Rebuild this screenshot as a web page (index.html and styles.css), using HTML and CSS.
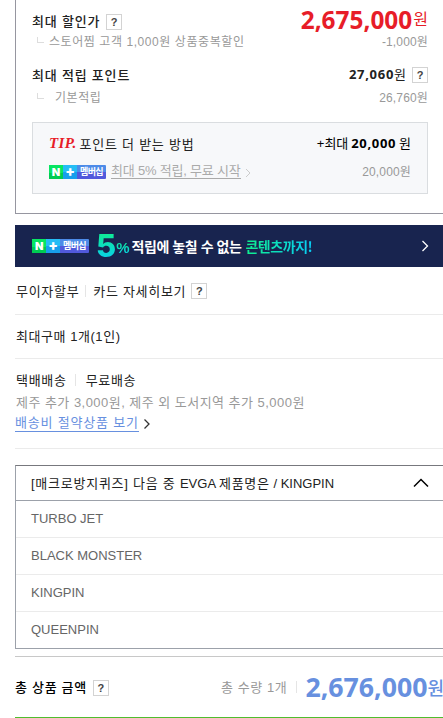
FILE: index.html
```html
<!DOCTYPE html>
<html lang="ko">
<head>
    <meta charset="UTF-8">
    <meta name="viewport" content="width=device-width, initial-scale=1.0">
    <title>상품 구매</title>
    <link rel="stylesheet" href="styles.css">
</head>
<body>
    <div class="purchase">
        <!-- Discount and points -->
        <section class="benefit">
            <div class="row row-price">
                <strong class="title">최대 할인가</strong>
                <button class="help">?</button>
                <span class="price"><b>2,675,000</b><span class="won">원</span></span>
            </div>
            <div class="row row-sub">
                <i class="branch"></i>
                <span class="sub-name">스토어찜 고객 1,000원 상품중복할인</span>
                <span class="sub-value">-1,000원</span>
            </div>
            <div class="row row-point">
                <strong class="title">최대 적립 포인트</strong>
                <span class="point"><b>27,060</b>원</span>
                <button class="help">?</button>
            </div>
            <div class="row row-sub">
                <i class="branch"></i>
                <span class="sub-name basic">기본적립</span>
                <span class="sub-value">26,760원</span>
            </div>

            <div class="tip">
                <div class="row tip-head">
                    <em class="tip-mark">TIP.</em>
                    <span class="tip-title">포인트 더 받는 방법</span>
                    <span class="tip-max">+최대 <b>20,000</b> 원</span>
                </div>
                <div class="row tip-body">
                    <span class="badge"><b>N</b><b class="plus">+</b><span>멤버십</span></span>
                    <a class="tip-link">최대 5% 적립, 무료 시작</a>
                    <svg class="tip-arrow" width="6" height="10" viewBox="0 0 6 10"><path d="M1 1l4 4-4 4"/></svg>
                    <span class="tip-value">20,000원</span>
                </div>
            </div>
        </section>

        <!-- Membership banner -->
        <div class="banner">
            <span class="badge"><b>N</b><b class="plus">+</b><span>멤버십</span></span>
            <span class="five">5</span><span class="percent">%</span>
            <span class="banner-text">적립에 놓칠 수 없는</span>
            <span class="banner-point">콘텐츠까지!</span>
            <svg class="banner-arrow" width="8" height="12" viewBox="0 0 8 12"><path d="M1.5 1l5 5-5 5"/></svg>
        </div>

        <div class="info info-card">
            <span class="card-free">무이자할부</span>
            <i class="bar"></i>
            <span class="card-more">카드 자세히보기</span>
            <button class="help">?</button>
        </div>
        <div class="info info-limit"><span class="limit">최대구매 1개(1인)</span></div>
        <div class="info info-delivery">
            <div class="row">
                <span class="method">택배배송</span>
                <i class="bar"></i>
                <span class="method">무료배송</span>
            </div>
            <div class="row"><span class="extra">제주 추가 3,000원, 제주 외 도서지역 추가 5,000원</span></div>
            <div class="row">
                <a class="saving">배송비 절약상품 보기</a>
                <svg class="saving-arrow" width="8" height="12" viewBox="0 0 8 12"><path d="M1.5 1.5l4.5 4.5-4.5 4.5"/></svg>
            </div>
        </div>

        <!-- Option select -->
        <div class="select">
            <div class="select-head">
                <span class="question"><span class="ko">[매크로방지퀴즈] 다음 중 </span>EVGA <span class="ko">제품명은</span> / KINGPIN</span>
                <svg class="select-arrow" width="16" height="10" viewBox="0 0 16 10"><path d="M1 8.5l7-7 7 7"/></svg>
            </div>
            <ul class="options">
                <li>TURBO JET</li>
                <li>BLACK MONSTER</li>
                <li>KINGPIN</li>
                <li>QUEENPIN</li>
            </ul>
        </div>

        <div class="total">
            <strong class="total-title">총 상품 금액</strong>
            <button class="help">?</button>
            <span class="total-count">총 수량 1개</span>
            <i class="bar"></i>
            <span class="total-price"><b>2,676,000</b><span class="total-won">원</span></span>
        </div>
    </div>
</body>
</html>
```
FILE: styles.css
```css
* {
    box-sizing: border-box;
}
body {
    margin: 0;
    background: #fff;
    font-family: "Liberation Sans", "Noto Sans CJK KR", sans-serif;
    font-size: 13px;
    color: #222;
    overflow: hidden;
}
.purchase {
    height: 718px;
    padding-left: 15px;
    overflow: hidden;
    white-space: nowrap;
}
.row {
    display: flex;
    align-items: center;
}
.row > *, .info > *, .banner > *, .total > * {
    flex-shrink: 0;
}
.help {
    width: 16px;
    height: 16px;
    padding: 0;
    border: 1px solid #d3d3d3;
    background: #fff;
    font: bold 11px/14px "Liberation Sans", sans-serif;
    color: #444;
    text-align: center;
}
.bar {
    width: 1px;
    height: 12px;
    background: #e5e5e5;
}

/* benefit box */
.benefit {
    height: 214px;
    padding: 9px 15px 0 16px;
    border: solid #9696a0;
    border-width: 0 0 1px 1px;
}
.title {
    font-weight: 500;
    letter-spacing: 0.8px;
}
.row-price {
    height: 22px;
}
.row-price .help {
    margin: 3px 0 0 6px;
}
.price {
    display: flex;
    align-items: center;
    margin-left: auto;
    color: #e71d28;
}
.price b {
    font: bold 24.4px/22px "Noto Sans", sans-serif;
}
.won {
    margin-left: 1px;
    font-size: 16px;
    line-height: 20px;
}
.row-sub {
    height: 18px;
    color: #999;
    font-size: 12px;
}
.sub-name {
    letter-spacing: 0.57px;
}
.branch {
    width: 7px;
    height: 6px;
    margin: 0 5px 1px 5px;
    border: solid #ddd;
    border-width: 0 0 1px 1px;
}
.basic {
    margin-left: 6px;
}
.sub-value {
    margin-left: auto;
    letter-spacing: 0.15px;
}
.row-point {
    height: 22px;
    margin: 14px 0 2px;
}
.point {
    margin-left: auto;
}
.point b {
    font: bold 13px/20px "Noto Sans", sans-serif;
    letter-spacing: 0.7px;
}
.row-point .help {
    margin: 2px 0 0 6px;
}

.tip {
    height: 72px;
    margin-top: 17px;
    padding: 10px 16px 0;
    border: 1px solid #dadde0;
    background: #f7f8fa;
}
.tip-head {
    height: 24px;
    padding-bottom: 4px;
}
.tip-mark {
    font: italic bold 15px/20px "Liberation Serif", serif;
    letter-spacing: 0.4px;
    color: #e71d28;
}
.tip-title {
    margin-left: 3px;
    letter-spacing: 0.75px;
}
.tip-max {
    margin-left: auto;
    color: #000;
    word-spacing: -0.8px;
}
.tip-max b {
    font: bold 13px/20px "Noto Sans", sans-serif;
    letter-spacing: 0.7px;
}
.tip-body {
    height: 30px;
    color: #aaa;
    font-size: 12px;
}
.badge {
    display: flex;
    width: 57px;
    height: 14px;
    border-radius: 1px;
    background: linear-gradient(#4d8be8 50%, #5159dc 50%);
    color: #fff;
    font: bold 9px/14px "Noto Sans CJK KR", sans-serif;
    text-align: center;
}
.badge b {
    width: 14px;
    background: linear-gradient(#08e662 60%, #00cc52 60%);
    font: 900 11px/14px "Inter", sans-serif;
}
.badge .plus {
    background: linear-gradient(#25bdf5 50%, #179fec 50%);
    font-size: 14px;
    line-height: 12px;
}
.badge span {
    flex: 1;
    letter-spacing: -0.6px;
}
.tip-link {
    margin: 0 0 1px 5px;
    border-bottom: 1px solid #aaa;
    line-height: 14px;
    font-size: 13px;
    letter-spacing: -0.2px;
}
.tip-arrow {
    margin: 2px 0 0 4px;
    fill: none;
    stroke: #ccc;
}
.tip-value {
    margin: 0 0 4px auto;
    color: #999;
    letter-spacing: 0.15px;
}

/* banner */
.banner {
    display: flex;
    align-items: center;
    height: 42px;
    margin-top: 11px;
    padding: 0 14px 0 17px;
    background: #18244f;
    color: #fff;
    font: bold 14px/20px "Noto Sans CJK KR", sans-serif;
    letter-spacing: -0.45px;
}
.five, .percent, .banner-point {
    background: linear-gradient(#10f08a, #08cdf5);
    -webkit-background-clip: text;
    background-clip: text;
    color: transparent;
}
.five {
    margin-left: 7px;
    font: 800 31px/32px "Inter", sans-serif;
    letter-spacing: 0;
}
.percent {
    margin-top: 3px;
    font: bold 15px/18px "Liberation Sans", sans-serif;
    letter-spacing: 0;
}
.banner-text {
    margin-left: 2px;
}
.banner-point {
    margin-left: 4px;
    background-image: linear-gradient(90deg, #10ef8c, #08cdf5);
}
.banner-arrow {
    margin-left: auto;
    fill: none;
    stroke: #fff;
    stroke-width: 1.3;
}

/* product info */
.info {
    border-bottom: 1px solid #ebebeb;
    letter-spacing: 0.7px;
}
.info-card, .info-limit {
    display: flex;
    align-items: center;
}
.info-card {
    height: 48px;
}
.card-free {
    margin-left: 1px;
}
.info-card .bar {
    margin: 0 7px 0 6px;
}
.info-card .help {
    margin-left: 5px;
}
.info-limit {
    height: 44px;
    padding: 0 0 2px 1px;
    letter-spacing: 0.55px;
}
.info-delivery {
    height: 90px;
    padding-top: 9px;
}
.info-delivery .row {
    height: 22px;
}
.info-delivery .bar {
    margin: 2px 10px 0 8px;
}
.method:first-child {
    margin-left: 1px;
}
.extra {
    margin-left: 1px;
    color: #999;
    letter-spacing: 0.47px;
}
.saving {
    border-bottom: 1px solid #6790df;
    color: #6790df;
    line-height: 16px;
    letter-spacing: 0.8px;
}
.saving-arrow {
    margin: 2px 0 0 4px;
    fill: none;
    stroke: #333;
    stroke-width: 1.3;
}

/* option select */
.select {
    margin-top: 16px;
    border: 1px solid #9ca1aa;
    border-right: 0;
    border-top-color: #77787d;
}
.select-head {
    display: flex;
    align-items: center;
    justify-content: space-between;
    height: 35px;
    padding: 0 14px 0 15px;
    border-bottom: 1px solid #9ca1aa;
}
.question {
    padding-bottom: 2px;
}
.ko {
    letter-spacing: 0.75px;
}
.select-arrow {
    fill: none;
    stroke: #000;
    stroke-width: 1.5;
}
.options {
    margin: 0;
    padding: 0;
    list-style: none;
    color: #666;
}
.options li {
    height: 37px;
    padding-left: 15px;
    border-bottom: 1px solid #ebebeb;
    line-height: 35px;
}
.options li:last-child {
    height: 36px;
    border-bottom: 0;
}

/* total */
.total {
    display: flex;
    align-items: center;
    height: 62px;
    margin-top: 7px;
    border-top: 1px solid #c8c8c8;
    border-bottom: 1px solid #4fbd2d;
}
.total-title {
    padding-bottom: 2px;
    font-weight: 500;
    color: #000;
    letter-spacing: 0.7px;
}
.total .help {
    margin: 2px 0 0 6px;
}
.total-count {
    margin-left: 112px;
    padding-bottom: 2px;
    color: #999;
    letter-spacing: 0.6px;
}
.total .bar {
    margin: 0 8px 0 9px;
}
.total-price {
    display: flex;
    align-items: center;
    color: #6790df;
}
.total-price b {
    font: bold 26.7px/30px "Noto Sans", sans-serif;
}
.total-won {
    font-size: 18px;
    font-weight: 500;
}
```
